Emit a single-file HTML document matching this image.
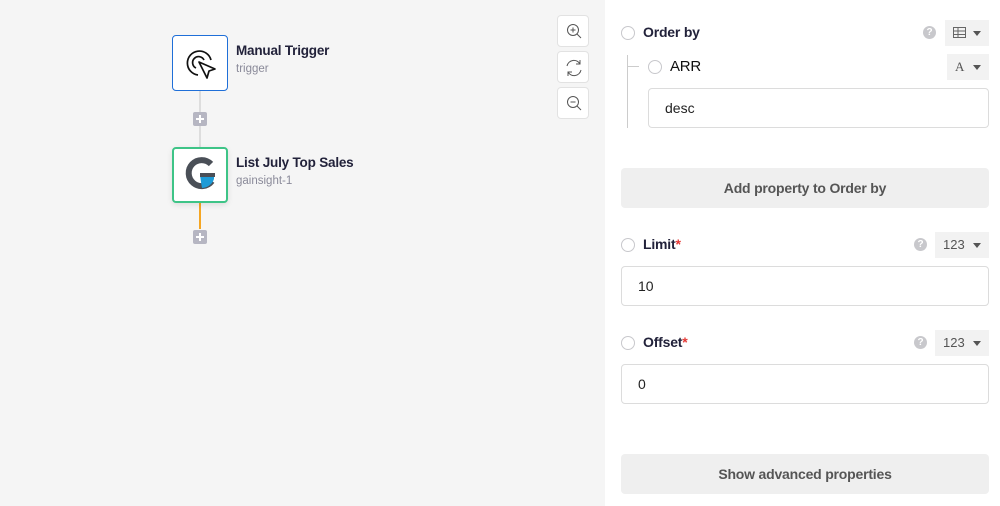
<!DOCTYPE html>
<html><head><meta charset="utf-8"><style>
*{box-sizing:border-box;margin:0;padding:0}
body{width:1000px;height:506px;overflow:hidden;background:#f5f5f5;font-family:"Liberation Sans",sans-serif;position:relative;color:#1f2030}
.abs{position:absolute}
.node{position:absolute;left:172px;width:56px;height:56px;background:#fff;border-radius:4px}
.title{position:absolute;left:236px;font-size:13.5px;font-weight:bold;color:#22223a;letter-spacing:-.2px}
.sub{position:absolute;left:236px;font-size:11.5px;color:#8a8a99}
.plus{position:absolute;left:193px;width:14px;height:14px;background:#b6b6c2;border-radius:2px}
.plus:before{content:"";position:absolute;left:3px;top:6px;width:8px;height:2px;background:#fff}
.plus:after{content:"";position:absolute;left:6px;top:3px;width:2px;height:8px;background:#fff}
.zb{position:absolute;left:557px;width:32px;height:32px;background:#fff;border:1px solid #e2e2e2;border-radius:4px}
.panel{position:absolute;left:605px;top:0;width:395px;height:506px;background:#fff}
.radio{position:absolute;width:14px;height:14px;border:1.5px solid #c8c8cc;border-radius:50%}
.lbl{position:absolute;font-size:14px;font-weight:bold;color:#22223a;letter-spacing:-.2px}
.req{color:#e53935}
.help{position:absolute;width:13px;height:13px;border-radius:50%;background:#c8c8cc;color:#fff;font-size:10px;font-weight:bold;text-align:center;line-height:13px}
.sel{position:absolute;background:#f2f2f2;height:26px;font-size:13px;color:#555;line-height:26px;padding-left:8px}
.sel:after{content:"";position:absolute;right:8px;top:11px;border:4px solid transparent;border-top:5px solid #555}
.inp{position:absolute;background:#fff;border:1px solid #dcdcdc;border-radius:4px;font-size:14px;color:#222;padding-left:16px}
.btn{position:absolute;left:621px;width:368px;height:40px;background:#efefef;border-radius:4px;font-size:14px;font-weight:bold;color:#555;text-align:center;line-height:40px;letter-spacing:-.2px}
</style></head><body>
<div class="abs" style="left:199px;top:91px;width:2px;height:56px;background:#ddd"></div>
<div class="abs" style="left:199px;top:203px;width:2px;height:26px;background:#f5a623"></div>
<div class="node" style="top:35px;border:1.5px solid #1f6fd8">
<svg width="56" height="56" viewBox="0 0 56 56" style="position:absolute;left:-1.5px;top:-1.5px"><g fill="none" stroke="#111" stroke-width="1.7" stroke-linejoin="round"><path d="M26 40 A12 12 0 1 1 39 25"/><path d="M24 33 A6 6 0 1 1 32 25"/><path d="M27 27 L43 34 L37 36 L35 43 Z"/></g></svg></div>
<div class="title" style="top:43px">Manual Trigger</div><div class="sub" style="top:63px">trigger</div>
<div class="plus" style="top:112px"></div>
<div class="node" style="top:147px;border:2px solid #3ec487;box-shadow:0 2px 6px rgba(0,0,0,.1)">
<svg width="52" height="52" viewBox="0 0 52 52"><path d="M37 15 A13 13 0 1 0 38 32" fill="none" stroke="#4a4f57" stroke-width="6"/><path d="M26 26 H40 V30 A13 13 0 0 1 28 39 L27 33 Z" fill="#1e9bd7"/><path d="M26 24 H41 V28 H26Z" fill="#4a4f57"/></svg></div>
<div class="title" style="top:155px">List July Top Sales</div><div class="sub" style="top:175px">gainsight-1</div>
<div class="plus" style="top:230px"></div>
<div class="zb" style="top:15px"><svg width="32" height="32"><circle cx="15" cy="14" r="5.5" fill="none" stroke="#555"/><path d="M19 18l4 4M12.5 14h5M15 11.5v5" stroke="#555"/></svg></div>
<div class="zb" style="top:51px"><svg width="32" height="32"><path d="M9 14a7 7 0 0 1 13-2M23 18a7 7 0 0 1-13 2M22 8v4h-4M10 24v-4h4" fill="none" stroke="#555"/></svg></div>
<div class="zb" style="top:87px"><svg width="32" height="32"><circle cx="15" cy="14" r="5.5" fill="none" stroke="#555"/><path d="M19 18l4 4M12.5 14h5" stroke="#555"/></svg></div>
<div class="panel"></div>
<div class="radio" style="left:621px;top:26px"></div><div class="lbl" style="left:643px;top:24px">Order by</div>
<div class="help" style="left:923px;top:26px">?</div>
<div class="sel" style="left:945px;top:20px;width:44px"><svg width="14" height="12" style="position:absolute;left:8px;top:7px"><rect x=".5" y=".5" width="12" height="10" fill="none" stroke="#666"/><path d="M.5 4h12M.5 7.5h12M5 .5v10" stroke="#666"/></svg></div>
<div class="abs" style="left:627px;top:55px;width:1px;height:73px;background:#ccc"></div>
<div class="abs" style="left:627px;top:66px;width:12px;height:1px;background:#ccc"></div>
<div class="radio" style="left:648px;top:60px"></div><div class="lbl" style="left:670px;top:58px;font-weight:normal;color:#111;font-size:15px">ARR</div>
<div class="sel" style="left:947px;top:54px;width:42px;font-family:'Liberation Serif',serif">A</div>
<div class="inp" style="left:648px;top:88px;width:341px;height:40px;line-height:38px">desc</div>
<div class="btn" style="top:168px">Add property to Order by</div>
<div class="radio" style="left:621px;top:238px"></div><div class="lbl" style="left:643px;top:236px">Limit<span class="req">*</span></div>
<div class="help" style="left:914px;top:238px">?</div>
<div class="sel" style="left:935px;top:232px;width:54px">123</div>
<div class="inp" style="left:621px;top:266px;width:368px;height:40px;line-height:38px">10</div>
<div class="radio" style="left:621px;top:336px"></div><div class="lbl" style="left:643px;top:334px">Offset<span class="req">*</span></div>
<div class="help" style="left:914px;top:336px">?</div>
<div class="sel" style="left:935px;top:330px;width:54px">123</div>
<div class="inp" style="left:621px;top:364px;width:368px;height:40px;line-height:38px">0</div>
<div class="btn" style="top:454px">Show advanced properties</div>
</body></html>
